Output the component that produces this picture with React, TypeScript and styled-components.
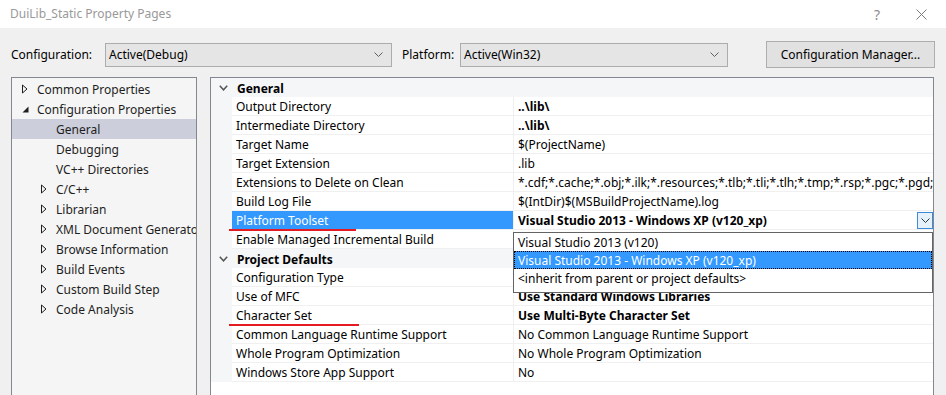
import styled, { createGlobalStyle } from "styled-components";

const GlobalStyle = createGlobalStyle`
  html, body {
    margin: 0;
    padding: 0;
    height: 395px;
    overflow: hidden;
  }
  body {
    background: #f0f0f0;
    font-family: "Noto Sans", "Liberation Sans", sans-serif;
    font-size: 12px;
    color: #000;
  }
`;

type TreeItem = { label: string; level: number; arrow?: "closed" | "open"; selected?: boolean };

const tree: TreeItem[] = [
  { label: "Common Properties", level: 0, arrow: "closed" },
  { label: "Configuration Properties", level: 0, arrow: "open" },
  { label: "General", level: 1, selected: true },
  { label: "Debugging", level: 1 },
  { label: "VC++ Directories", level: 1 },
  { label: "C/C++", level: 1, arrow: "closed" },
  { label: "Librarian", level: 1, arrow: "closed" },
  { label: "XML Document Generator", level: 1, arrow: "closed" },
  { label: "Browse Information", level: 1, arrow: "closed" },
  { label: "Build Events", level: 1, arrow: "closed" },
  { label: "Custom Build Step", level: 1, arrow: "closed" },
  { label: "Code Analysis", level: 1, arrow: "closed" },
];

type Prop = { name: string; value: string; bold?: boolean; selected?: boolean; marked?: number; dropdown?: boolean };

// values of the two rows under the open list are covered by it, so they stay empty
const groups: { title: string; props: Prop[] }[] = [
  {
    title: "General",
    props: [
      { name: "Output Directory", value: "..\\lib\\", bold: true },
      { name: "Intermediate Directory", value: "..\\lib\\", bold: true },
      { name: "Target Name", value: "$(ProjectName)" },
      { name: "Target Extension", value: ".lib" },
      {
        name: "Extensions to Delete on Clean",
        value: "*.cdf;*.cache;*.obj;*.ilk;*.resources;*.tlb;*.tli;*.tlh;*.tmp;*.rsp;*.pgc;*.pgd;*.meta;$(TargetPath)",
      },
      { name: "Build Log File", value: "$(IntDir)$(MSBuildProjectName).log" },
      {
        name: "Platform Toolset",
        value: "Visual Studio 2013 - Windows XP (v120_xp)",
        bold: true,
        selected: true,
        marked: 127,
        dropdown: true,
      },
      { name: "Enable Managed Incremental Build", value: "" },
    ],
  },
  {
    title: "Project Defaults",
    props: [
      { name: "Configuration Type", value: "" },
      { name: "Use of MFC", value: "Use Standard Windows Libraries", bold: true },
      { name: "Character Set", value: "Use Multi-Byte Character Set", bold: true, marked: 130 },
      { name: "Common Language Runtime Support", value: "No Common Language Runtime Support" },
      { name: "Whole Program Optimization", value: "No Whole Program Optimization" },
      { name: "Windows Store App Support", value: "No" },
    ],
  },
];

const toolsets = [
  "Visual Studio 2013 (v120)",
  "Visual Studio 2013 - Windows XP (v120_xp)",
  "<inherit from parent or project defaults>",
];

function SmallChevron({ color = "#606060" }: { color?: string }) {
  return (
    <svg width="9" height="5" viewBox="0 0 9 5">
      <polyline points="0.5,0.5 4.5,4.5 8.5,0.5" fill="none" stroke={color} strokeWidth="1" />
    </svg>
  );
}

function TreeArrow({ kind }: { kind?: "closed" | "open" }) {
  if (kind === "closed")
    return (
      <svg width="6" height="10" viewBox="0 0 6 10">
        <polygon points="0.5,1 5,5 0.5,9" fill="none" stroke="#1e1e1e" strokeWidth="1" />
      </svg>
    );
  if (kind === "open")
    return (
      <svg width="7" height="7" viewBox="0 0 7 7">
        <polygon points="6.5,0.5 6.5,6.5 0.5,6.5" fill="#1e1e1e" />
      </svg>
    );
  return null;
}

export default function App() {
  return (
    <Window>
      <GlobalStyle />
      <TitleBar>
        <Title>DuiLib_Static Property Pages</Title>
        <TitleButtons>
          <HelpGlyph>?</HelpGlyph>
          <svg width="11" height="11" viewBox="0 0 11 11">
            <path d="M0.5 0.5 L10.5 10.5 M10.5 0.5 L0.5 10.5" stroke="#7a7a7a" strokeWidth="1" />
          </svg>
        </TitleButtons>
      </TitleBar>

      <Toolbar>
        <Label $width={94}>Configuration:</Label>
        <Combo $width={287}>
          <span>Active(Debug)</span>
          <SmallChevron />
        </Combo>
        <Label $width={58} $gap={10}>Platform:</Label>
        <Combo $width={268}>
          <span>Active(Win32)</span>
          <SmallChevron />
        </Combo>
        <ManagerButton>Configuration Manager...</ManagerButton>
      </Toolbar>

      <Main>
        <TreePanel>
          {tree.map((item) => (
            <TreeRow key={item.label} $level={item.level} $selected={item.selected}>
              <ArrowBox>
                <TreeArrow kind={item.arrow} />
              </ArrowBox>
              <span>{item.label}</span>
            </TreeRow>
          ))}
        </TreePanel>

        <GridPanel>
          {groups.map((group) => (
            <div key={group.title}>
              <GroupRow>
                <GroupToggle>
                  <svg width="9" height="6" viewBox="0 0 9 6">
                    <polyline points="0.8,0.8 4.5,4.8 8.2,0.8" fill="none" stroke="#555" strokeWidth="1.5" />
                  </svg>
                </GroupToggle>
                <GroupTitle>{group.title}</GroupTitle>
              </GroupRow>
              {group.props.map((p) => (
                <Row key={p.name}>
                  <Margin />
                  <NameCell $selected={p.selected}>
                    {p.name}
                    {p.marked && <RedMark style={{ width: p.marked }} />}
                  </NameCell>
                  <ValueCell>
                    <ValueText $bold={p.bold}>{p.value}</ValueText>
                    {p.dropdown && (
                      <>
                        <DropButton>
                          <SmallChevron color="#333" />
                        </DropButton>
                        <Popup>
                          {toolsets.map((t) => (
                            <PopupItem key={t} $selected={t === p.value}>
                              {t}
                            </PopupItem>
                          ))}
                        </Popup>
                      </>
                    )}
                  </ValueCell>
                </Row>
              ))}
            </div>
          ))}
        </GridPanel>
      </Main>
    </Window>
  );
}

const Window = styled.div`
  width: 946px;
  height: 395px;
  overflow: hidden;
  background: #f0f0f0;
`;

const TitleBar = styled.div`
  height: 28px;
  background: #fff;
  display: flex;
  align-items: center;
  justify-content: space-between;
  padding: 0 19px 0 10px;
`;

const Title = styled.div`
  color: #999;
  font-size: 12px;
  padding-bottom: 1px;
`;

const TitleButtons = styled.div`
  display: flex;
  align-items: center;
  gap: 36px;
`;

const HelpGlyph = styled.span`
  color: #8c8c8c;
  font-size: 14px;
`;

const Toolbar = styled.div`
  display: flex;
  align-items: center;
  height: 27px;
  margin-top: 13px;
  padding: 0 11px;
`;

const Label = styled.div<{ $width: number; $gap?: number }>`
  width: ${(p) => p.$width}px;
  margin-left: ${(p) => p.$gap ?? 0}px;
  white-space: nowrap;
`;

const Combo = styled.div<{ $width: number }>`
  box-sizing: border-box;
  width: ${(p) => p.$width}px;
  height: 24px;
  background: #e5e5e5;
  border: 1px solid #acacac;
  display: flex;
  align-items: center;
  justify-content: space-between;
  padding: 0 8px 0 3px;
`;

const ManagerButton = styled.div`
  box-sizing: border-box;
  margin-left: auto;
  width: 169px;
  height: 27px;
  background: #e1e1e1;
  border: 1px solid #adadad;
  display: flex;
  align-items: center;
  justify-content: center;
`;

const Main = styled.div`
  display: grid;
  grid-template-columns: 186px 1fr;
  gap: 13px;
  padding: 9px 12px 0 11px;
`;

const TreePanel = styled.div`
  box-sizing: border-box;
  height: 340px;
  background: #f5f5f5;
  border: 1px solid #828790;
  padding-top: 1px;
`;

const TreeRow = styled.div<{ $level: number; $selected?: boolean }>`
  height: 20px;
  display: flex;
  align-items: center;
  padding-left: ${(p) => 10 + p.$level * 19}px;
  background: ${(p) => (p.$selected ? "#cccedb" : "transparent")};
  white-space: nowrap;
  overflow: hidden;
  color: #1e1e1e;
`;

const ArrowBox = styled.span`
  width: 15px;
  flex: none;
  display: flex;
  align-items: center;
`;

const GridPanel = styled.div`
  box-sizing: border-box;
  height: 340px;
  background: #fff;
  border: 1px solid #828790;
`;

const GroupRow = styled.div`
  box-sizing: border-box;
  height: 19px;
  padding-top: 1px;
  display: flex;
  align-items: center;
  background: #f5f6f8;
`;

const GroupToggle = styled.span`
  width: 25px;
  display: flex;
  justify-content: center;
  padding-right: 1px;
`;

const GroupTitle = styled.span`
  font-weight: bold;
`;

const Row = styled.div`
  height: 19px;
  display: grid;
  grid-template-columns: 21px 282px 1fr;
`;

const Margin = styled.div`
  background: #f5f6f8;
`;

const NameCell = styled.div<{ $selected?: boolean }>`
  position: relative;
  box-sizing: border-box;
  height: 19px;
  padding-left: 4px;
  line-height: 20px;
  border-bottom: 1px solid #f0f0f0;
  border-right: 1px solid #f0f0f0;
  white-space: nowrap;
  background: ${(p) => (p.$selected ? "#3399ff" : "#fff")};
  color: ${(p) => (p.$selected ? "#fff" : "#000")};
`;

const RedMark = styled.div`
  position: absolute;
  left: -3px;
  bottom: -2px;
  height: 2px;
  background: #e41b23;
  z-index: 2;
`;

const ValueCell = styled.div`
  position: relative;
  min-width: 0;
  box-sizing: border-box;
  height: 19px;
  padding-left: 4px;
  line-height: 20px;
  border-bottom: 1px solid #f0f0f0;
`;

const ValueText = styled.div<{ $bold?: boolean }>`
  height: 18px;
  font-weight: ${(p) => (p.$bold ? "bold" : "normal")};
  white-space: nowrap;
  overflow: hidden;
`;

const DropButton = styled.div`
  position: absolute;
  right: 0;
  top: 1px;
  box-sizing: border-box;
  width: 16px;
  height: 17px;
  border: 1px solid #3c8ad8;
  background: #e5f1fb;
  display: flex;
  align-items: center;
  justify-content: center;
`;

const Popup = styled.div`
  position: absolute;
  left: -1px;
  right: 0;
  top: 21px;
  z-index: 3;
  background: #fff;
  border: 1px solid #646464;
  padding-bottom: 5px;
`;

const PopupItem = styled.div<{ $selected?: boolean }>`
  box-sizing: border-box;
  height: 18px;
  line-height: 17px;
  padding-left: 3px;
  white-space: nowrap;
  background: ${(p) => (p.$selected ? "#3399ff" : "#fff")};
  color: ${(p) => (p.$selected ? "#fff" : "#000")};
  border: 1px ${(p) => (p.$selected ? "dotted #000" : "solid transparent")};
`;
